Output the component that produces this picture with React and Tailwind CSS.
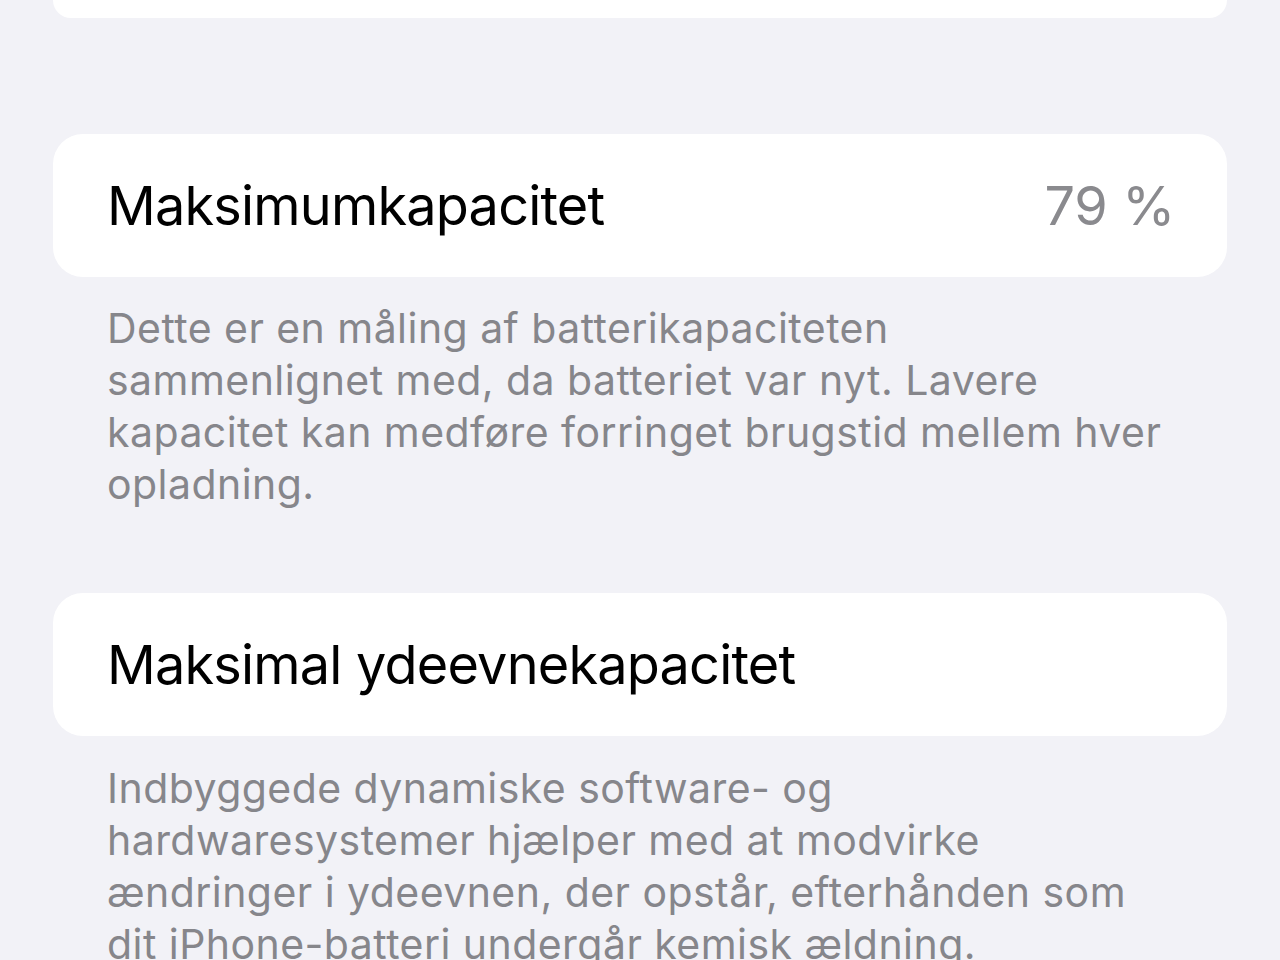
import React from 'react';

const font = { fontFamily: 'Inter, "Noto Sans", sans-serif' };

const Row = ({ label, value }) => (
    <div className="flex items-center justify-between h-[143px] bg-white rounded-[30px] pl-[54px] pr-[52px]">
        <span className="text-[54px] text-black tracking-[-0.8px]">{label}</span>
        {value && <span className="text-[54px] text-[#8a8a8e] tracking-[-0.3px]">{value}</span>}
    </div>
);

const Footer = ({ lines }) => (
    <div className="px-[54px] text-[41px] leading-[52px] text-[#86868b] tracking-[0.45px]">
        {lines.map((line, i) => (
            <div key={i} className="whitespace-nowrap">{line}</div>
        ))}
    </div>
);

export default function App() {
    return (
        <div className="w-[1280px] h-[960px] overflow-hidden bg-[#f2f2f7] px-[53px]" style={font}>
            <div className="h-[18px] bg-white rounded-b-[30px]"></div>

            <div className="mt-[116px]">
                <Row label="Maksimumkapacitet" value="79 %" />
            </div>
            <div className="mt-[25px]">
                <Footer
                    lines={[
                        'Dette er en måling af batterikapaciteten',
                        'sammenlignet med, da batteriet var nyt. Lavere',
                        'kapacitet kan medføre forringet brugstid mellem hver',
                        'opladning.',
                    ]}
                />
            </div>

            <div className="mt-[83px]">
                <Row label="Maksimal ydeevnekapacitet" />
            </div>
            <div className="mt-[26px]">
                <Footer
                    lines={[
                        'Indbyggede dynamiske software- og',
                        'hardwaresystemer hjælper med at modvirke',
                        'ændringer i ydeevnen, der opstår, efterhånden som',
                        'dit iPhone-batteri undergår kemisk ældning.',
                    ]}
                />
            </div>
        </div>
    );
}
